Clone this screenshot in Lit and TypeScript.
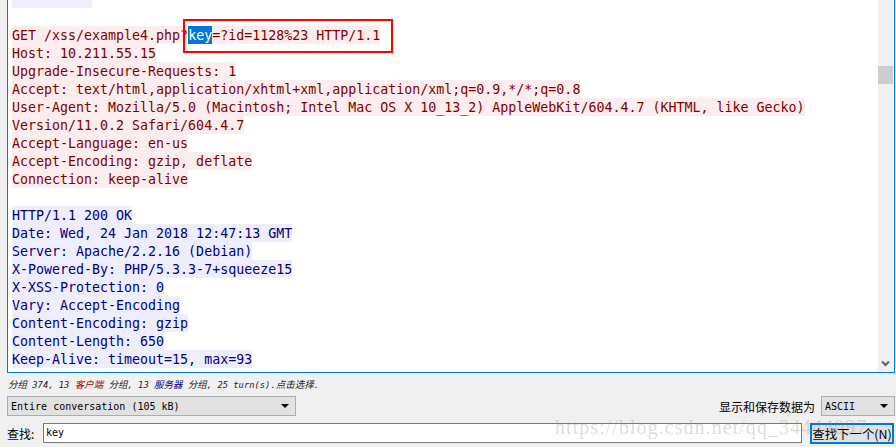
import { LitElement, html, css } from "lit";
import { customElement } from "lit/decorators.js";

const req = [
  "Host: 10.211.55.15",
  "Upgrade-Insecure-Requests: 1",
  "Accept: text/html,application/xhtml+xml,application/xml;q=0.9,*/*;q=0.8",
  "User-Agent: Mozilla/5.0 (Macintosh; Intel Mac OS X 10_13_2) AppleWebKit/604.4.7 (KHTML, like Gecko)",
  "Version/11.0.2 Safari/604.4.7",
  "Accept-Language: en-us",
  "Accept-Encoding: gzip, deflate",
  "Connection: keep-alive",
];
const res = [
  "HTTP/1.1 200 OK",
  "Date: Wed, 24 Jan 2018 12:47:13 GMT",
  "Server: Apache/2.2.16 (Debian)",
  "X-Powered-By: PHP/5.3.3-7+squeeze15",
  "X-XSS-Protection: 0",
  "Vary: Accept-Encoding",
  "Content-Encoding: gzip",
  "Content-Length: 650",
  "Keep-Alive: timeout=15, max=93",
];

@customElement("app-root")
export class AppRoot extends LitElement {
  static styles = css`
    :host {
      display: block;
      position: relative;
      width: 896px;
      height: 447px;
      overflow: hidden;
      background: #f0f0f0;
      font-family: "Noto Sans CJK SC", "Liberation Sans", sans-serif;
      font-size: 12px;
      color: #000;
    }
    .pane {
      box-sizing: border-box;
      margin-left: 7px;
      width: 888px;
      height: 373px;
      background: #fff;
      border-left: 1px solid #0078d7;
      border-right: 1px solid #0078d7;
      border-bottom: 1px solid #0078d7;
      display: flex;
    }
    .text {
      flex: 1;
      min-width: 0;
      padding-left: 4px;
      overflow: hidden;
      font-family: "DejaVu Sans Mono", monospace;
      font-size: 13.3px;
      line-height: 18px;
    }
    .cut {
      width: 80px;
      height: 8px;
      background: #ededfb;
    }
    .blank { height: 18px; }
    .line { height: 18px; white-space: pre; display: flex; }
    .line span { display: block; height: 18px; line-height: 20px; }
    .req span { background: #fbeded; color: #800000; }
    .res span { background: #ededfb; color: #000080; }
    .line span.sel { background: #0078d7; color: #fff; }
    .scroll {
      width: 15px;
      margin-right: 1px;
      background: #f0f0f0;
      position: relative;
      display: flex;
      flex-direction: column;
      align-items: center;
      justify-content: flex-end;
      padding-bottom: 5px;
      box-sizing: border-box;
    }
    .thumb {
      position: absolute;
      left: 0;
      top: 66px;
      width: 15px;
      height: 18px;
      background: #cdcdcd;
    }
    .chev { display: block; }
    .status {
      height: 23px;
      padding-left: 8px;
      font-family: "DejaVu Sans Mono", "Noto Sans CJK SC", monospace;
      font-size: 8.8px;
      font-style: italic;
      line-height: 22px;
      color: #222;
      white-space: pre;
    }
    .status b { font-weight: 400; font-size: 9.5px; font-family: "Noto Sans CJK SC", sans-serif; }
    .status .c { color: #a00000; }
    .status .s { color: #000080; }
    .row {
      display: flex;
      padding-left: 7px;
    }
    .r1 {
      height: 20px;
      align-items: center;
      justify-content: space-between;
      padding-right: 1px;
    }
    .sel-box {
      box-sizing: border-box;
      height: 20px;
      background: #e1e1e1;
      border: 1px solid #adadad;
      display: flex;
      align-items: center;
      justify-content: space-between;
      padding: 0 3px;
      font-family: "DejaVu Sans Mono", monospace;
      font-size: 10px;
    }
    .wide { width: 289px; }
    .narrow { width: 74px; }
    .arrow {
      width: 0;
      height: 0;
      border-left: 4px solid transparent;
      border-right: 4px solid transparent;
      border-top: 4px solid #000;
      margin-right: 3px;
    }
    .right { display: flex; align-items: center; gap: 6px; }
    .r2 { margin-top: 7px; height: 22px; gap: 8px; align-items: flex-start; }
    .label { width: 28px; line-height: 22px; white-space: nowrap; }
    .input {
      box-sizing: border-box;
      width: 759px;
      height: 20px;
      background: #fff;
      border: 1px solid #7a7a7a;
      padding-left: 2px;
      font-family: "DejaVu Sans Mono", monospace;
      font-size: 10px;
      line-height: 17px;
    }
    .btn {
      box-sizing: border-box;
      width: 84px;
      height: 21px;
      background: #e1e1e1;
      border: 2px solid #0078d7;
      display: flex;
      align-items: center;
      justify-content: center;
      font-size: 12.4px;
      white-space: nowrap;
    }
    .redbox {
      position: absolute;
      left: 183px;
      top: 19px;
      width: 206px;
      height: 30px;
      border: 2px solid #f00;
    }
    .wm {
      position: absolute;
      left: 555px;
      top: 416px;
      font-family: "Liberation Serif", serif;
      font-size: 20px;
      letter-spacing: 1.05px;
      color: rgba(140, 140, 120, 0.3);
      white-space: nowrap;
      pointer-events: none;
    }
  `;

  render() {
    return html`
      <div class="pane">
        <div class="text">
          <div class="cut"></div>
          <div class="blank"></div>
          <div class="line req"><span>GET /xss/example4.php?</span><span class="sel">key</span><span>=?id=1128%23 HTTP/1.1</span></div>
          ${req.map((l) => html`<div class="line req"><span>${l}</span></div>`)}
          <div class="blank"></div>
          ${res.map((l) => html`<div class="line res"><span>${l}</span></div>`)}
        </div>
        <div class="scroll">
          <div class="thumb"></div>
          <svg class="chev" width="9" height="7" viewBox="0 0 9 7">
            <path d="M1 1.5 L4.5 5 L8 1.5" fill="none" stroke="#606060" stroke-width="2" />
          </svg>
        </div>
      </div>
      <div class="status"><b>分组</b> 374, 13 <b class="c">客户端</b> <b>分组</b>, 13 <b class="s">服务器</b> <b>分组</b>, 25 turn(s).<b>点击选择</b>.</div>
      <div class="row r1">
        <div class="sel-box wide"><span>Entire conversation (105 kB)</span><i class="arrow"></i></div>
        <div class="right">
          <span>显示和保存数据为</span>
          <div class="sel-box narrow"><span>ASCII</span><i class="arrow"></i></div>
        </div>
      </div>
      <div class="row r2">
        <span class="label">查找:</span>
        <div class="input">key</div>
        <div class="btn">查找下一个(N)</div>
      </div>
      <div class="redbox"></div>
      <div class="wm">https://blog.csdn.net/qq_34444097</div>
    `;
  }
}
